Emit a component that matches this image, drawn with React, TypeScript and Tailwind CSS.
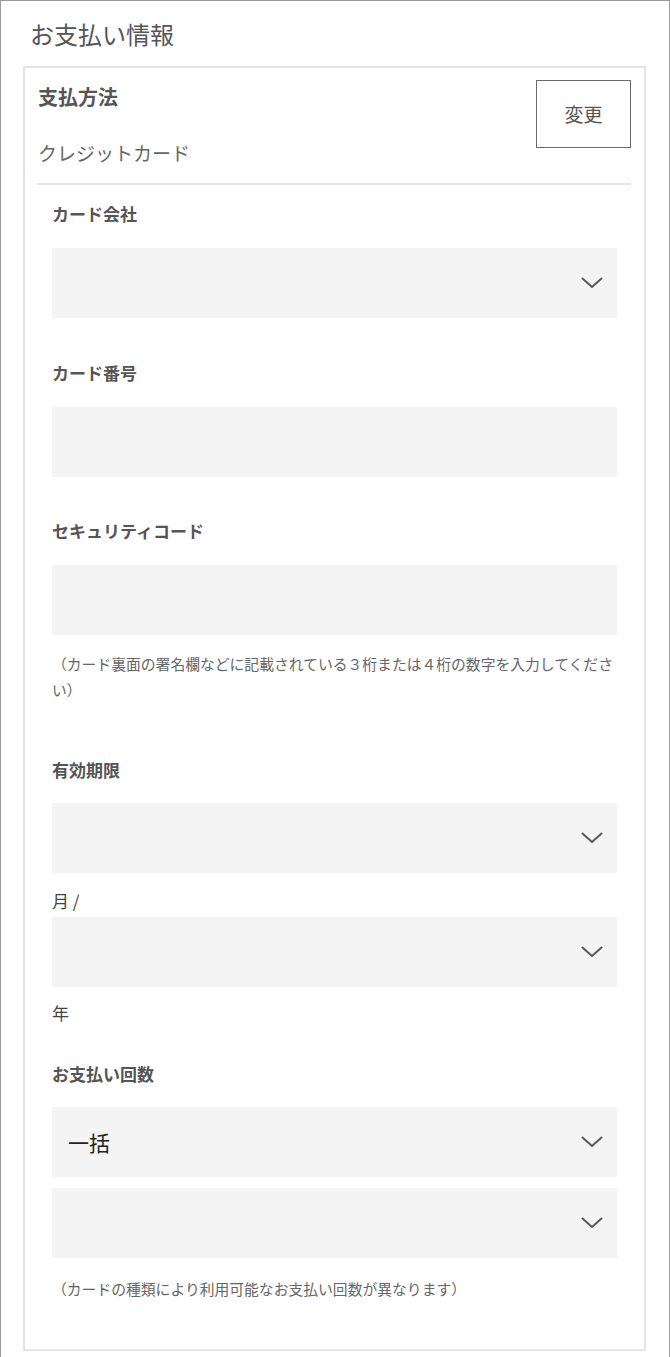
import React from "react";

const font = { fontFamily: '"Noto Sans CJK JP", "Noto Sans", sans-serif' };

function Chevron() {
  return (
    <svg width="22" height="12" viewBox="0 0 22 12" className="shrink-0">
      <path d="M1.5 1.5 L11 10 L20.5 1.5" fill="none" stroke="#595959" strokeWidth="2" strokeLinecap="round" strokeLinejoin="round" />
    </svg>
  );
}

function SelectBox({ value }: { value?: string }) {
  return (
    <div className="h-[70px] bg-[#f4f4f4] flex items-center justify-between pl-[16px] pr-[14px]">
      <span className="text-[21px] text-[#222] leading-none">{value ?? ""}</span>
      <Chevron />
    </div>
  );
}

function InputBox() {
  return <div className="h-[70px] bg-[#f4f4f4]" />;
}

function Label({ children, className = "" }: { children: React.ReactNode; className?: string }) {
  return <div className={`text-[17px] leading-[24px] font-bold text-[#555] ${className}`}>{children}</div>;
}

export default function App() {
  return (
    <div className="h-[1357px] w-[670px] border-x border-t border-[#9a9a9a] bg-white overflow-hidden" style={font}>
      <div className="pl-[29px] pt-[17px] text-[24px] leading-[32px] text-[#555]">お支払い情報</div>
      <div className="ml-[22px] mt-[16px] w-[623px] border-2 border-[#e3e3e3] px-[13px] pb-[47px]">
        <div className="flex justify-between items-start pt-[12px] pb-[17px] border-b-2 border-[#e4e4e4]">
          <div className="pt-[3px]">
            <div className="text-[20px] leading-[28px] font-bold text-[#555]">支払方法</div>
            <div className="mt-[29px] text-[19px] leading-[26px] text-[#666]">クレジットカード</div>
          </div>
          <div className="w-[95px] h-[68px] border border-[#6a6a6a] flex items-center justify-center text-[19px] text-[#555]">
            変更
          </div>
        </div>
        <div className="pl-[14px] pr-[14px] pt-[17px]">
          <Label>カード会社</Label>
          <div className="mt-[22px]"><SelectBox /></div>

          <Label className="mt-[43px]">カード番号</Label>
          <div className="mt-[22px]"><InputBox /></div>

          <Label className="mt-[42px]">セキュリティコード</Label>
          <div className="mt-[22px]"><InputBox /></div>
          <div className="mt-[16px] text-[14.8px] leading-[26px] text-[#666]">
            （カード裏面の署名欄などに記載されている３桁または４桁の数字を入力してください）
          </div>

          <Label className="mt-[55px]">有効期限</Label>
          <div className="mt-[21px]"><SelectBox /></div>
          <div className="mt-[16px] text-[17px] leading-[24px] text-[#444]">月 /</div>
          <div className="mt-[4px]"><SelectBox /></div>
          <div className="mt-[14px] text-[17px] leading-[24px] text-[#444]">年</div>

          <Label className="mt-[37px]">お支払い回数</Label>
          <div className="mt-[21px]"><SelectBox value="一括" /></div>
          <div className="mt-[11px]"><SelectBox /></div>
          <div className="mt-[18px] text-[14.8px] leading-[26px] text-[#666]">
            （カードの種類により利用可能なお支払い回数が異なります）
          </div>
        </div>
      </div>
    </div>
  );
}
